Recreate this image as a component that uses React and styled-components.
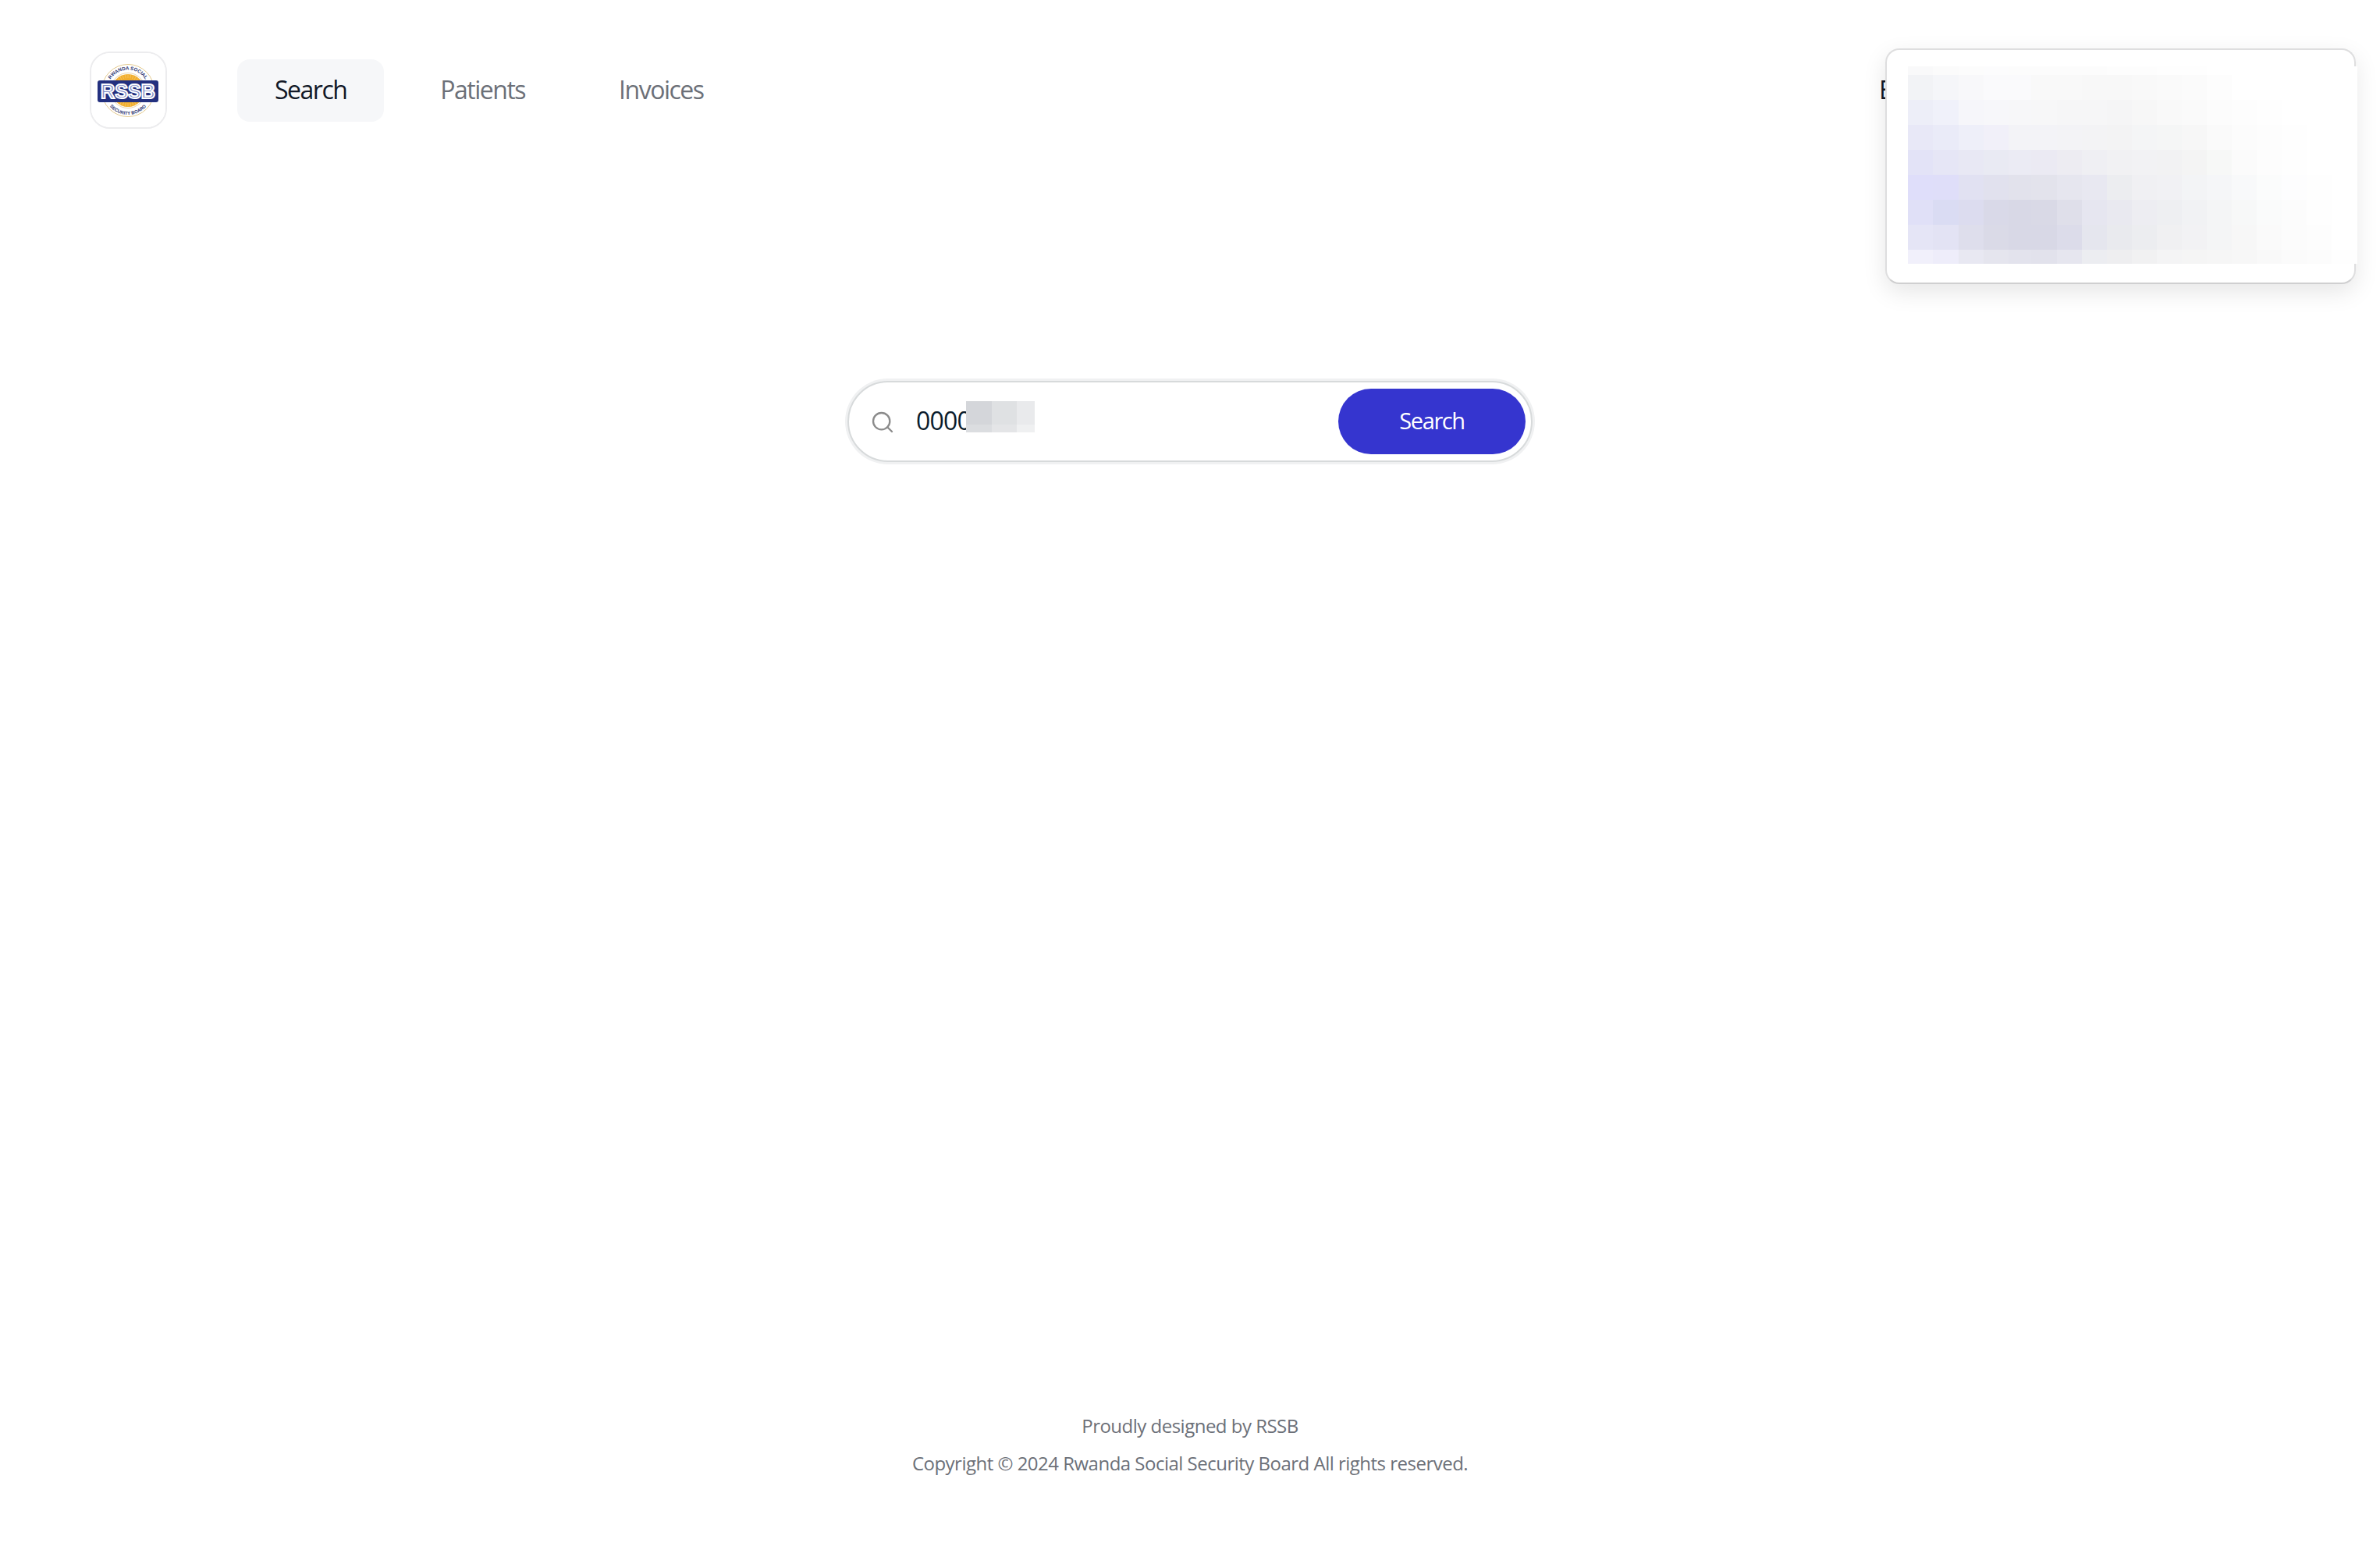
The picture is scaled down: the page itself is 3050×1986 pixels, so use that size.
import React from "react";
import styled, { createGlobalStyle } from "styled-components";
import { Search as SearchIcon } from "lucide-react";

const Global = createGlobalStyle`
  html, body { margin: 0; padding: 0; background: #fff; }
  body { font-family: "Open Sans", "Noto Sans", "Liberation Sans", sans-serif; }
  * { box-sizing: border-box; }
`;

const Page = styled.div`
  position: relative;
  min-height: 1986px;
  display: flex;
  flex-direction: column;
  overflow: hidden;
`;

const Header = styled.header`
  display: flex;
  align-items: center;
  padding: 66px 0 0 115px;
`;

const LogoBox = styled.div`
  width: 99px;
  height: 99px;
  border: 2px solid #ececee;
  border-radius: 26px;
  overflow: hidden;
  flex: none;
`;

const Nav = styled.nav`
  display: flex;
  gap: 24px;
  margin-left: 90px;
`;

const NavItem = styled.a`
  height: 80px;
  padding: 0 48px 2px;
  display: flex;
  align-items: center;
  border-radius: 16px;
  font-size: 32px;
  letter-spacing: -1.5px;
  color: ${(p) => (p.$active ? "#111827" : "#6c7078")};
  background: ${(p) => (p.$active ? "#f6f7f9" : "transparent")};
`;

const UserName = styled.span`
  margin-left: auto;
  width: 642px;
  padding-bottom: 2px;
  font-size: 32px;
  color: #111827;
`;

const Card = styled.aside`
  position: absolute;
  left: 2416px;
  top: 62px;
  width: 603px;
  height: 302px;
  padding: 21px 0 0 27px;
  background: #fff;
  border: 2px solid #dededf;
  border-bottom-color: #cfcfd0;
  border-radius: 18px;
  box-shadow: 0 10px 30px rgba(0, 0, 0, 0.1);
`;

const Main = styled.main`
  display: flex;
  justify-content: center;
  padding-top: 323px;
`;

const SearchForm = styled.form`
  position: relative;
  width: 878px;
  height: 104px;
  padding: 8px 7px 8px 8px;
  display: flex;
  align-items: center;
  background: #fff;
  border: 2px solid #d7dadb;
  border-radius: 52px;
  box-shadow: 0 0 0 3px #f0f1f2;
`;

const IconSlot = styled.span`
  display: flex;
  margin: 2px 0 0 19px;
  color: #8b8b8b;
`;

const SearchInput = styled.input`
  flex: 1;
  min-width: 0;
  margin: 0 0 3px 27px;
  padding: 0;
  border: 0;
  outline: 0;
  background: transparent;
  font: 400 32px "Open Sans", sans-serif;
  letter-spacing: -0.8px;
  color: #0b1c2c;
`;

const SearchButton = styled.button`
  width: 240px;
  height: 84px;
  flex: none;
  padding: 0 0 4px;
  border: 0;
  border-radius: 42px;
  background: #3535cf;
  color: #fff;
  font: 400 29px "Open Sans", sans-serif;
  letter-spacing: -1.4px;
`;

const ValueMask = styled.svg`
  position: absolute;
  left: 150px;
  top: 24px;
  display: block;
`;

const Footer = styled.footer`
  margin-top: auto;
  padding-bottom: 87px;
  display: flex;
  flex-direction: column;
  align-items: center;
  font-size: 24px;
  line-height: 48px;
  letter-spacing: -0.51px;
  color: #6c7078;
`;

const COLS = [32, 33, 32, 32, 29, 33, 32, 32, 32, 32, 32, 32, 32, 32, 32, 32, 32, 33];
const ROWS = [11, 32, 32, 32, 32, 32, 32, 32, 18];
const MOSAIC = [
  "f9f9fa fbfbfb fcfcfc fcfcfd fcfcfc fcfcfc fcfcfc fcfcfc fdfdfd fdfdfd fefefe fefefe ffffff ffffff ffffff ffffff ffffff ffffff",
  "f2f3f6 f5f6f9 f8f8fa fafafc fafafc f9f9f9 f9f9f9 f8f8f8 f8f8f8 f9f9f9 fafafa fbfbfb fdfdfd ffffff ffffff ffffff ffffff ffffff",
  "edeef8 f0f1fa f6f6fa f7f7fa f7f7f9 f7f7f8 f6f6f7 f6f6f7 f5f5f6 f7f7f7 f9f9f9 fafafa fcfcfc fdfdfd fefefe ffffff ffffff ffffff",
  "e8e8f7 eaebf8 eeeff9 f1f0f9 f3f3f7 f3f3f7 f3f3f6 f3f3f5 f3f3f4 f4f5f6 f5f6f6 f7f7f7 fafafa fcfcfc fdfdfd fefefe ffffff ffffff",
  "e3e3f7 e6e6f6 e8e8f4 e9eaf3 ebebf4 ebeaf3 edecf2 efeff3 f1f1f3 f2f2f4 f2f2f3 f4f4f4 f7f8f7 fbfbfb fdfdfd fefefe ffffff ffffff",
  "dfdefa dfdef9 e1e1f2 e1e1ee e2e2ec e3e3ec e6e6ef e8e8f1 ecedf0 f0f0f3 f1f1f4 f3f4f6 f5f6f8 f8f9fa fbfcfc fdfdfe fefefe ffffff",
  "e0e0f7 dadcf3 dcdcef d9d9e8 d8d8e6 d9d9e6 dfdfea e6e6f0 e9e9f0 ededf2 eeeff2 f1f2f4 f4f5f6 f7f8f8 fafbfb fcfcfc fefefe ffffff",
  "e5e5f6 e3e3f4 dedeec dadae7 d8d8e6 d8d8e6 dcdcea e5e6ee e9eaee ecedf0 f0f0f2 f2f2f4 f4f5f6 f7f7f7 fafafa fcfcfc fdfdfd ffffff",
  "f1f0fb eeedfa e8e8f2 e5e5ee e3e3ed e2e2ec e6e6ef ecedf1 eeeef0 f1f1f2 f4f4f5 f5f5f5 f6f6f6 f7f7f7 f9f9f9 fbfbfb fcfcfc fefefe",
];

function Mosaic({ cols, rows, data, as: Comp = "svg" }) {
  const width = cols.reduce((a, b) => a + b, 0);
  const height = rows.reduce((a, b) => a + b, 0);
  let y = 0;
  return (
    <Comp width={width} height={height} viewBox={`0 0 ${width} ${height}`} shapeRendering="crispEdges">
      {data.map((row, r) => {
        let x = 0;
        const cells = row.split(" ").map((c, i) => {
          const cell = <rect key={i} x={x} y={y} width={cols[i]} height={rows[r]} fill={`#${c}`} />;
          x += cols[i];
          return cell;
        });
        y += rows[r];
        return <g key={r}>{cells}</g>;
      })}
    </Comp>
  );
}

function Logo() {
  const rays = Array.from({ length: 36 }, (_, i) => (i * Math.PI) / 18);
  return (
    <svg width="95" height="95" viewBox="2 2 95 95" style={{ display: "block" }}>
      <defs>
        <path id="rssb-top" d="M 22.5 50 A 26.5 26.5 0 0 1 75.5 50" />
        <path id="rssb-bottom" d="M 18 50 A 31 31 0 0 0 80 50" />
      </defs>
      <rect x="0" y="0" width="99" height="99" fill="#fff" />
      <circle cx="49" cy="50" r="33.5" fill="#fff" stroke="#e3c98e" strokeWidth="1" />
      <circle cx="49" cy="50" r="21" fill="#f2ae2e" />
      {rays.map((a, i) => (
        <line
          key={i}
          x1={49 + 16 * Math.cos(a)}
          y1={50 + 16 * Math.sin(a)}
          x2={49 + 21 * Math.cos(a)}
          y2={50 + 21 * Math.sin(a)}
          stroke="#f7cc70"
          strokeWidth="0.7"
        />
      ))}
      <circle cx="49" cy="50" r="22.5" fill="none" stroke="#d8b877" strokeWidth="0.6" />
      <text fontFamily="Liberation Sans" fontWeight="700" fontSize="6.2" fill="#2c3572">
        <textPath href="#rssb-top" startOffset="50%" textAnchor="middle">RWANDA SOCIAL</textPath>
      </text>
      <text fontFamily="Liberation Sans" fontWeight="700" fontSize="5.9" fill="#2c3572">
        <textPath href="#rssb-bottom" startOffset="50%" textAnchor="middle">SECURITY BOARD</textPath>
      </text>
      <rect x="10" y="37" width="78" height="28" rx="3" fill="#23307f" />
      <text
        x="49"
        y="60"
        textAnchor="middle"
        fontFamily="Liberation Sans"
        fontWeight="700"
        fontSize="25"
        textLength="70"
        lengthAdjust="spacingAndGlyphs"
        fill="#7d8ac4"
        stroke="#fff"
        strokeWidth="1.9"
      >
        RSSB
      </text>
    </svg>
  );
}

export default function App() {
  return (
    <Page>
      <Global />
      <Header>
        <LogoBox>
          <Logo />
        </LogoBox>
        <Nav>
          <NavItem $active>Search</NavItem>
          <NavItem>Patients</NavItem>
          <NavItem>Invoices</NavItem>
        </Nav>
        <UserName>E</UserName>
      </Header>
      <Card>
        <Mosaic cols={COLS} rows={ROWS} data={MOSAIC} />
      </Card>
      <Main>
        <SearchForm onSubmit={(e) => e.preventDefault()}>
          <IconSlot>
            <SearchIcon size={32} strokeWidth={1.75} />
          </IconSlot>
          <SearchInput defaultValue="0000" />
          <SearchButton type="submit">Search</SearchButton>
          <Mosaic
            as={ValueMask}
            cols={[33, 32, 23]}
            rows={[30, 10]}
            data={["d4d6da dfe1e3 e9eaec", "dbdde0 e4e5e7 eff0f1"]}
          />
        </SearchForm>
      </Main>
      <Footer>
        <span>Proudly designed by RSSB</span>
        <span>Copyright © 2024 Rwanda Social Security Board All rights reserved.</span>
      </Footer>
    </Page>
  );
}
